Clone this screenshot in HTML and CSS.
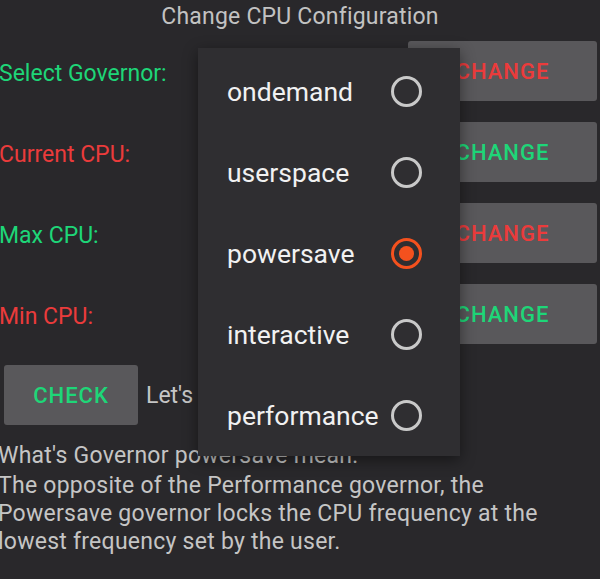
FILE: index.html
```html
<!DOCTYPE html>
<html>
<head>
<meta charset="utf-8">
<link rel="stylesheet" href="styles.css">
</head>
<body>
<div class="screen">
  <div class="title">Change CPU Configuration</div>
  <div class="rows">
    <div class="row"><span class="label green">Select Governor:</span><button class="btn red">CHANGE</button></div>
    <div class="row"><span class="label red">Current CPU:</span><button class="btn green">CHANGE</button></div>
    <div class="row"><span class="label green">Max CPU:</span><button class="btn red">CHANGE</button></div>
    <div class="row"><span class="label red">Min CPU:</span><button class="btn green">CHANGE</button></div>
  </div>
  <div class="check-row">
    <button class="btn check green">CHECK</button>
    <span class="lets">Let's</span>
  </div>
  <div class="info">
    <div class="question">What's Governor powersave mean:</div>
    <p class="desc">The opposite of the Performance governor, the Powersave governor locks the CPU frequency at the lowest frequency set by the user.</p>
  </div>

  <div class="popup">
    <div class="item"><span>ondemand</span><span class="radio"></span></div>
    <div class="item"><span>userspace</span><span class="radio"></span></div>
    <div class="item"><span>powersave</span><span class="radio on"></span></div>
    <div class="item"><span>interactive</span><span class="radio"></span></div>
    <div class="item"><span>performance</span><span class="radio"></span></div>
  </div>
</div>
</body>
</html>
```

FILE: styles.css
```css
html, body {
  margin: 0;
  padding: 0;
  background: #29282b;
}
body {
  width: 600px;
  height: 579px;
  overflow: hidden;
  font-family: Roboto, "Liberation Sans", sans-serif;
}
.screen {
  position: relative;
  width: 600px;
  height: 579px;
  background: #29282b;
}
.title {
  text-align: center;
  color: #c2c2c2;
  font-size: 23px;
  letter-spacing: 0.2px;
  line-height: 26px;
  padding-top: 4px;
}
.rows {
  display: flex;
  flex-direction: column;
  gap: 21px;
  margin-top: 11px;
}
.row {
  display: flex;
  align-items: center;
  justify-content: space-between;
  height: 60px;
  padding-right: 3px;
}
.label {
  font-size: 23px;
  margin-left: -1px;
  position: relative;
  top: 2px;
}
.green { color: #1ed678; }
.red { color: #eb3b3b; }
.btn {
  border: none;
  background: #59585b;
  border-radius: 3px;
  font-family: Roboto, "Liberation Sans", sans-serif;
  font-size: 22px;
  font-weight: 500;
  letter-spacing: 1px;
  width: 189px;
  height: 60px;
  padding: 0;
}
.check-row {
  display: flex;
  align-items: center;
  margin-top: 21px;
  padding-left: 4px;
  gap: 8px;
}
.btn.check {
  width: 134px;
}
.lets {
  color: #c5c5c5;
  font-size: 23px;
}
.info {
  color: #c5c5c5;
  font-size: 23px;
  letter-spacing: 0.25px;
  margin-left: -2px;
}
.question {
  margin-top: 17px;
  line-height: 28px;
}
.desc {
  margin: 2px 0 0;
  line-height: 28px;
  width: 560px;
}
.popup {
  position: absolute;
  left: 198px;
  top: 48px;
  width: 262px;
  padding-top: 3px;
  background: #2f2e31;
  box-shadow: 0 4px 14px rgba(0,0,0,0.45);
}
.item {
  display: flex;
  align-items: center;
  height: 81px;
  padding-left: 29px;
  padding-right: 38px;
  color: #f1f1f1;
  font-size: 26.5px;
}
.item span:first-child {
  flex: 1;
}
.radio {
  box-sizing: border-box;
  width: 31px;
  height: 31px;
  border-radius: 50%;
  border: 3px solid #c9c9c9;
  position: relative;
  flex: none;
}
.radio.on {
  border-color: #f4511e;
}
.radio.on::after {
  content: "";
  position: absolute;
  left: 5px;
  top: 5px;
  width: 15px;
  height: 15px;
  border-radius: 50%;
  background: #f4511e;
}
```
